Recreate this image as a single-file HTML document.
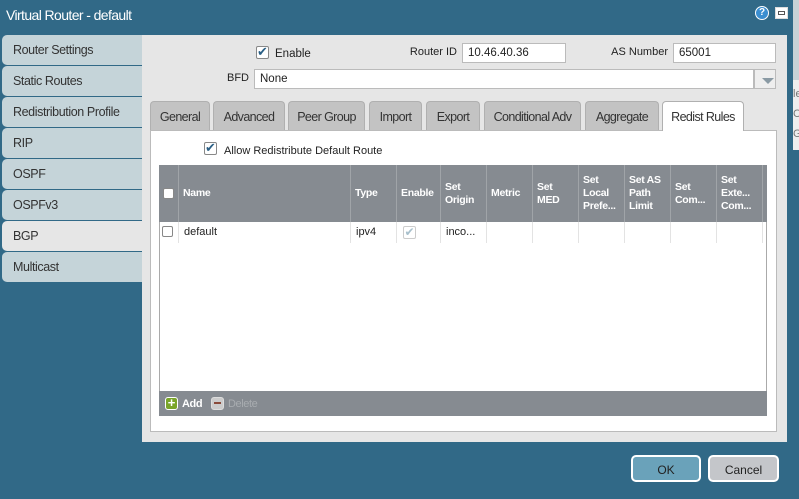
<!DOCTYPE html>
<html><head><meta charset="utf-8"><style>
*{box-sizing:border-box;margin:0;padding:0}
body{width:799px;height:499px;background:#316987;font-family:"Liberation Sans",sans-serif;position:relative;overflow:hidden;font-size:12px;color:#222}
.a{position:absolute}
.title{left:6px;top:7px;color:#fff;font-size:14px;letter-spacing:-0.6px}
.nav{left:2px;width:140px;height:30px;background:#c5d4d9;border-radius:5px 0 0 5px;padding:8px 0 0 11px;font-size:12.5px;color:#333;letter-spacing:-0.4px}
.nav.sel{background:#e6e6e6}
.main{left:142px;top:35px;width:645px;height:407px;background:#e6e6e6}
.inp{background:#fff;border:1px solid #bbb;height:20px;padding:3px 5px;font-size:11.5px}
.lbl{font-size:11px;text-align:right}
.cb{width:13px;height:13px;border:1px solid #888;background:#fff;border-radius:2px}
.tab{top:101px;height:29px;background:#c3c3c3;border:1px solid #b0b0b0;border-bottom:none;border-radius:4px 4px 0 0;text-align:center;padding-top:8px;font-size:12.5px;color:#333;letter-spacing:-0.6px}
.tab.sel{background:#fff;height:30px}
.content{left:150px;top:130px;width:627px;height:302px;background:#fff;border:1px solid #bbb}
.hd{top:165px;height:57px;background:#868b91;border-right:1px solid #a0a4a8;color:#fff;font-weight:bold;font-size:10.5px;padding:0 4px;display:flex;align-items:center;line-height:13px;letter-spacing:-0.3px}
.cell{top:222px;height:21px;border-right:1px solid #e3e3e3;font-size:11px;padding:4px 5px}
.btn{top:455px;height:27px;border:2px solid #fff;border-radius:5px;text-align:center;padding-top:6px;font-size:12px;color:#222}
</style></head><body>
<div class="a title">Virtual Router - default</div>
<div class="a" style="left:755px;top:6px;width:14px;height:14px;border-radius:50%;background:#3a8ed0;border:1.5px solid #fff;color:#fff;font-size:10px;font-weight:bold;text-align:center;line-height:11px">?</div>
<div class="a" style="left:775px;top:7px;width:13px;height:12px;background:#fff;border:1px solid #ddd"><div style="margin:3px 2px;height:4px;border:1px solid #555"></div></div>
<div class="a" style="left:793px;top:0;width:6px;height:80px;background:#c8d2d6"></div>
<div class="a" style="left:793px;top:80px;width:6px;height:70px;background:#eee;color:#777;font-size:11px;line-height:20px;padding-top:4px">le<br>C<br>G</div>

<div class="a nav" style="top:35px">Router Settings</div>
<div class="a nav" style="top:66px">Static Routes</div>
<div class="a nav" style="top:97px">Redistribution Profile</div>
<div class="a nav" style="top:128px">RIP</div>
<div class="a nav" style="top:159px">OSPF</div>
<div class="a nav" style="top:190px">OSPFv3</div>
<div class="a nav sel" style="top:221px">BGP</div>
<div class="a nav" style="top:252px">Multicast</div>

<div class="a main"></div>
<div class="a cb" style="left:256px;top:46px;color:#2a5f85;font-size:13px;line-height:10px;text-align:center">✔</div>
<div class="a" style="left:275px;top:48px;font-size:11.5px">Enable</div>
<div class="a lbl" style="left:380px;width:77px;top:46px">Router ID</div>
<div class="a inp" style="left:462px;top:43px;width:104px">10.46.40.36</div>
<div class="a lbl" style="left:590px;width:78px;top:46px">AS Number</div>
<div class="a inp" style="left:673px;top:43px;width:103px">65001</div>
<div class="a lbl" style="left:200px;width:49px;top:72px">BFD</div>
<div class="a inp" style="left:254px;top:69px;width:500px">None</div>
<div class="a inp" style="left:754px;top:69px;width:22px;background:#eee"><div style="margin:5px 0 0 2px;width:0;height:0;border-left:6px solid transparent;border-right:6px solid transparent;border-top:6px solid #8a9aa4"></div></div>

<div class="a tab" style="left:150px;width:60px">General</div>
<div class="a tab" style="left:213px;width:72px">Advanced</div>
<div class="a tab" style="left:288px;width:77px">Peer Group</div>
<div class="a tab" style="left:369px;width:53px">Import</div>
<div class="a tab" style="left:426px;width:54px">Export</div>
<div class="a tab" style="left:484px;width:97px">Conditional Adv</div>
<div class="a tab" style="left:585px;width:74px">Aggregate</div>
<div class="a content"></div>
<div class="a tab sel" style="left:662px;width:82px">Redist Rules</div>

<div class="a cb" style="left:204px;top:142px;color:#2a5f85;font-size:13px;line-height:10px;text-align:center">✔</div>
<div class="a" style="left:224px;top:145px;font-size:11px">Allow Redistribute Default Route</div>

<div class="a" style="left:159px;top:165px;width:608px;height:251px;background:#fff;border:1px solid #aaa"></div>
<div class="a hd" style="left:159px;width:20px"><div class="cb" style="width:11px;height:11px;margin-left:0"></div></div>
<div class="a hd" style="left:179px;width:172px">Name</div>
<div class="a hd" style="left:351px;width:46px">Type</div>
<div class="a hd" style="left:397px;width:44px">Enable</div>
<div class="a hd" style="left:441px;width:46px">Set<br>Origin</div>
<div class="a hd" style="left:487px;width:46px">Metric</div>
<div class="a hd" style="left:533px;width:46px">Set<br>MED</div>
<div class="a hd" style="left:579px;width:46px">Set<br>Local<br>Prefe...</div>
<div class="a hd" style="left:625px;width:46px">Set AS<br>Path<br>Limit</div>
<div class="a hd" style="left:671px;width:46px">Set<br>Com...</div>
<div class="a hd" style="left:717px;width:46px">Set<br>Exte...<br>Com...</div>
<div class="a hd" style="left:763px;width:4px;border:none;padding:0"></div>

<div class="a cell" style="left:159px;width:20px;padding:4px 3px"><div class="cb" style="width:11px;height:11px"></div></div>
<div class="a cell" style="left:179px;width:172px">default</div>
<div class="a cell" style="left:351px;width:46px">ipv4</div>
<div class="a cell" style="left:397px;width:44px;padding:4px 6px"><div class="cb" style="border-color:#ccc;color:#a8c0cc;font-size:12px;line-height:10px;text-align:center">✔</div></div>
<div class="a cell" style="left:441px;width:46px">inco...</div>
<div class="a cell" style="left:487px;width:46px"></div>
<div class="a cell" style="left:533px;width:46px"></div>
<div class="a cell" style="left:579px;width:46px"></div>
<div class="a cell" style="left:625px;width:46px"></div>
<div class="a cell" style="left:671px;width:46px"></div>
<div class="a cell" style="left:717px;width:46px"></div>

<div class="a" style="left:159px;top:391px;width:608px;height:25px;background:#868b91"></div>
<div class="a" style="left:165px;top:397px;width:13px;height:13px;background:#7aa52a;border:1.5px solid #fff;border-radius:3px;color:#fff;font-weight:bold;font-size:13px;line-height:9px;text-align:center">+</div>
<div class="a" style="left:182px;top:398px;color:#fff;font-size:11px;font-weight:bold;letter-spacing:-0.4px">Add</div>
<div class="a" style="left:211px;top:397px;width:13px;height:13px;background:#ccc;border:1.5px solid #ddd;border-radius:3px"><div style="margin:4px 2px;height:2px;background:#8a4a3a"></div></div>
<div class="a" style="left:228px;top:398px;color:#a8acb0;font-size:11px;letter-spacing:-0.4px">Delete</div>

<div class="a btn" style="left:631px;width:70px;background:#6aa2ba">OK</div>
<div class="a btn" style="left:708px;width:71px;background:#c4c6ca">Cancel</div>
</body></html>
